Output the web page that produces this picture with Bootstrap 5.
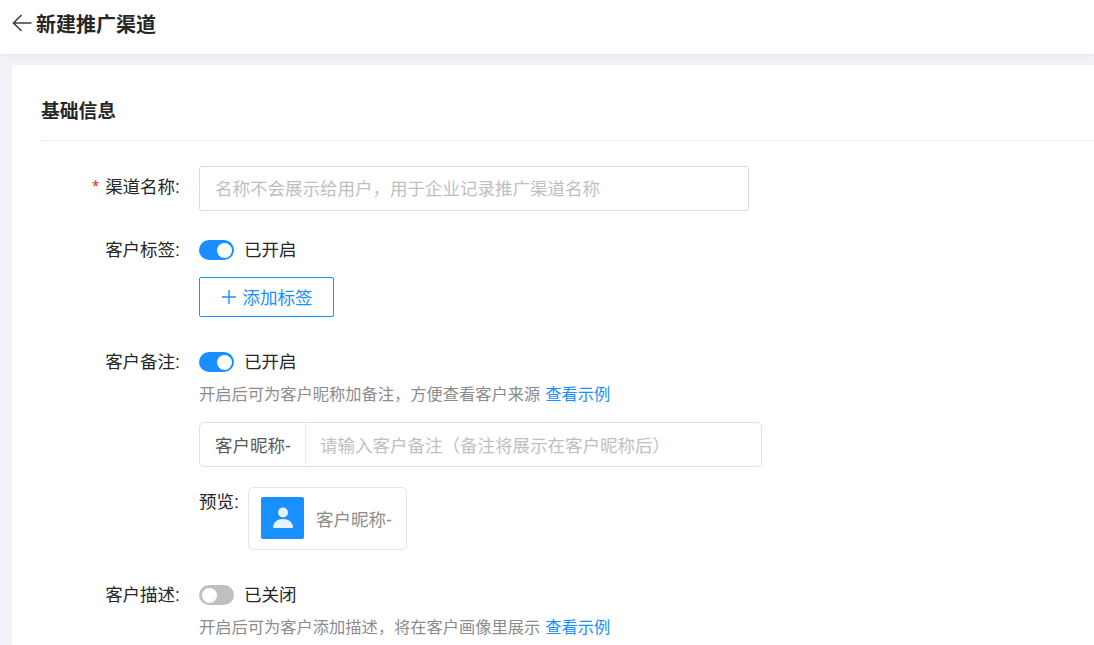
<!DOCTYPE html>
<html lang="zh-CN">
<head>
<meta charset="utf-8">
<title>新建推广渠道</title>
<link href="https://cdn.jsdelivr.net/npm/bootstrap@5.3.0/dist/css/bootstrap.min.css" rel="stylesheet">
<style>
html,body{height:645px;overflow:hidden}
body{background:#f0f2f5;font-family:"Liberation Sans","Noto Sans CJK SC",sans-serif;color:#262626;font-size:17.5px}
.topbar{height:54px;background:#fff;box-shadow:0 1px 4px rgba(0,0,0,.08);padding:0 0 4px 12px;gap:4px}
.topbar svg{margin-bottom:4px}
.topbar h1{font-size:20px;font-weight:700;margin:0;line-height:28px;color:#262626}
.sheet{background:#fff;margin:11px 0 0 12px;padding:0 0 0 30px;height:600px}
.sheet h2{font-size:18.75px;font-weight:700;margin:0 0 0 -1px;line-height:25px;color:#262626;padding:34px 0 16px}
.rule-line{height:1px;background:#efefef}
.lab{width:157px;flex:none;text-align:right;padding-right:19px;line-height:22px;white-space:nowrap;color:#262626}
.lab i{color:#f5222d;font-style:normal;font-family:"Liberation Sans",sans-serif;margin-right:6px}
.fld{width:550px;height:45px;border:1px solid #dcdcdc;border-radius:3px;padding:0 15px;color:#bfbfbf;line-height:45px;white-space:nowrap}
.sw{width:35px;height:20px;border-radius:10px;background:#1890ff;position:relative;flex:none}
.sw::after{content:"";position:absolute;width:15px;height:15px;border-radius:50%;background:#fff;top:2.5px;right:2.5px}
.sw.off{background:#bfbfbf}
.sw.off::after{right:auto;left:2.5px}
.swrow{gap:10px;line-height:22px;color:#262626}
.addbtn{width:135px;height:40px;border:1px solid #1890ff;border-radius:2px;color:#1890ff;gap:6px;background:#fff;margin-top:16px}
.addbtn span{padding-top:3px}
.hint{font-size:16.25px;line-height:21px;color:#8c8c8c;margin-top:11px}
.hint span{color:#1890ff;margin-left:5px}
.combo{width:563px;height:45px;border:1px solid #e1e1e1;border-radius:5px;margin-top:17px;white-space:nowrap}
.combo-pre{width:106px;height:100%;border-right:1px solid #ececec;padding-left:15px;color:#595959;line-height:47px}
.combo-in{padding-left:14px;color:#bfbfbf;height:100%;line-height:47px}
.pv-lab{line-height:22px;width:49px;flex:none;padding-top:4px}
.pv-box{width:159px;height:63px;border:1px solid #e4e4e4;border-radius:5px;padding:0 12px 2px;gap:12px;color:#8c8c8c}
.pv-box span{padding-top:5px}
.pv-ava{width:43px;height:42px;background:#1890ff;border-radius:2px;flex:none}
</style>
</head>
<body>
<header class="topbar d-flex align-items-center">
  <svg width="20" height="20" viewBox="0 0 20 20" fill="none" stroke="#404040" stroke-width="1.6"><path d="M19.5 10H1.5M9.5 2 1.5 10l8 8"/></svg>
  <h1>新建推广渠道</h1>
</header>
<main class="sheet">
  <h2>基础信息</h2>
  <div class="rule-line"></div>
  <div class="d-flex align-items-start" style="margin-top:25px">
    <div class="lab" style="padding-top:10px"><i>*</i>渠道名称:</div>
    <div class="fld">名称不会展示给用户，用于企业记录推广渠道名称</div>
  </div>
  <div class="d-flex align-items-start" style="margin-top:28px">
    <div class="lab">客户标签:</div>
    <div>
      <div class="d-flex align-items-center swrow"><span class="sw"></span><span>已开启</span></div>
      <div class="addbtn d-flex align-items-center justify-content-center">
        <svg width="16" height="16" viewBox="0 0 16 16" stroke="#1890ff" stroke-width="1.4"><path d="M8 1v14M1 8h14"/></svg><span>添加标签</span>
      </div>
    </div>
  </div>
  <div class="d-flex align-items-start" style="margin-top:34px">
    <div class="lab">客户备注:</div>
    <div>
      <div class="d-flex align-items-center swrow"><span class="sw"></span><span>已开启</span></div>
      <div class="hint">开启后可为客户昵称加备注，方便查看客户来源<span>查看示例</span></div>
      <div class="combo d-flex align-items-center">
        <div class="combo-pre">客户昵称-</div>
        <div class="combo-in">请输入客户备注（备注将展示在客户昵称后）</div>
      </div>
      <div class="d-flex align-items-start" style="margin-top:20px">
        <div class="pv-lab">预览:</div>
        <div class="pv-box d-flex align-items-center">
          <div class="pv-ava d-flex align-items-center justify-content-center">
            <svg width="20" height="21" viewBox="0 0 20 21" fill="#e6f3ff"><circle cx="10" cy="5.5" r="5"/><path d="M0 21c0-6 4.5-9 10-9s10 3 10 9z"/></svg>
          </div>
          <span>客户昵称-</span>
        </div>
      </div>
    </div>
  </div>
  <div class="d-flex align-items-start" style="margin-top:34px">
    <div class="lab">客户描述:</div>
    <div>
      <div class="d-flex align-items-center swrow"><span class="sw off"></span><span>已关闭</span></div>
      <div class="hint">开启后可为客户添加描述，将在客户画像里展示<span>查看示例</span></div>
    </div>
  </div>
</main>
</body>
</html>
